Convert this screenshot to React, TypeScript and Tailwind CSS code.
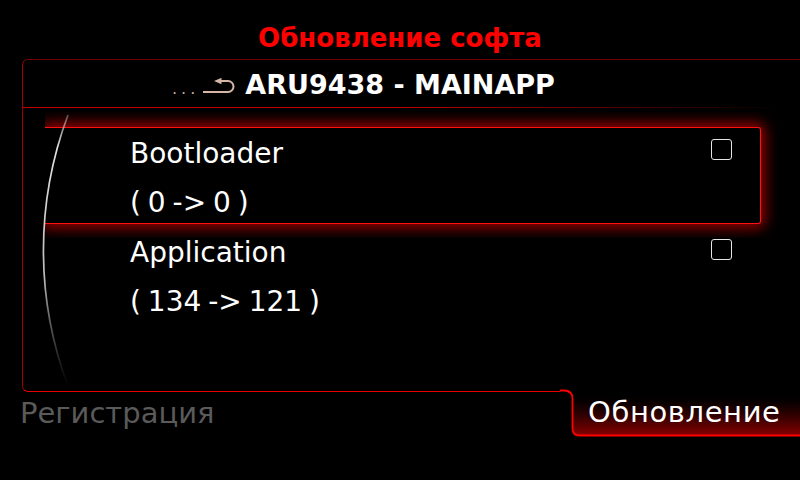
import React from "react";

function Checkbox() {
  return <div className="w-[21px] h-[21px] border-[1.5px] border-[#e6e6e6] rounded-[3px] shrink-0" />;
}

function ReturnIcon() {
  return (
    <svg width="34" height="16" viewBox="0 0 34 16" className="ml-[3px]">
      <path d="M1 14 H26 A5.5 5.5 0 0 0 26 3 H18" fill="none" stroke="#d6b6a6" strokeWidth="2" />
      <polygon points="12,3 19.5,-0.2 19.5,6.2" fill="#d6b6a6" />
    </svg>
  );
}

export default function App() {
  return (
    <div className="w-[800px] h-[480px] bg-black overflow-hidden font-['DejaVu_Sans',sans-serif] text-white flex flex-col">
      {/* Title */}
      <div className="h-[59px] pt-[23px] text-center text-[26px] leading-[30px] font-bold text-[#ff0000]">
        Обновление софта
      </div>

      {/* Panel */}
      <div className="relative ml-[22px] h-[333px] shrink-0 border-t border-l border-b border-t-[#700000] border-l-[#a00000] border-b-[#e80000] rounded-l-[6px]">
        {/* Header */}
        <div className="h-[47px] pt-[3px] pl-[149px] flex items-baseline leading-[44px]">
          <span className="text-[16px] tracking-[4px] text-[#c8a898]">...</span>
          <ReturnIcon />
          <span className="ml-[9px] text-[27px] font-bold">ARU9438 - MAINAPP</span>
        </div>
        <div className="h-px bg-gradient-to-r from-[#c00000] via-[#c00000] to-transparent w-[760px]" />

        {/* Selected row (glow clipped on the left) */}
        <div className="mt-[4px] ml-[22px] w-[740px] overflow-hidden pt-[15px] pr-[24px] pb-[14px] -mb-[14px]">
          <div className="w-[716px] h-[97px] border border-l-0 border-[#ff1010] rounded-r-[3px] bg-black shadow-[0_0_14px_4px_rgba(255,0,0,0.6)] flex items-start">
            <div className="flex-1 pl-[85px] pt-[1px] text-[28px] leading-[49px] [word-spacing:-2px]">
              <div>Bootloader</div>
              <div>( 0 -&gt; 0 )</div>
            </div>
            <div className="mt-[11px] mr-[28px]">
              <Checkbox />
            </div>
          </div>
        </div>

        {/* Second row */}
        <div className="ml-[22px] w-[716px] h-[96px] flex items-start">
          <div className="flex-1 pl-[85px] pt-[4px] text-[28px] leading-[49px] [word-spacing:-2px]">
            <div>Application</div>
            <div>( 134 -&gt; 121 )</div>
          </div>
          <div className="mt-[15px] mr-[29px]">
            <Checkbox />
          </div>
        </div>

        <svg className="absolute left-0 top-0" width="100" height="331" viewBox="0 0 100 331">
          <defs>
            <linearGradient id="arcg" gradientUnits="userSpaceOnUse" x1="0" y1="55" x2="0" y2="326">
              <stop offset="0" stopColor="#ffffff" stopOpacity="0.3" />
              <stop offset="0.12" stopColor="#eeeeee" stopOpacity="0.95" />
              <stop offset="0.6" stopColor="#d0d0d0" stopOpacity="0.9" />
              <stop offset="1" stopColor="#909090" stopOpacity="0" />
            </linearGradient>
          </defs>
          <path d="M45 55 A386 386 0 0 0 45 326" fill="none" stroke="url(#arcg)" strokeWidth="1.7" />
        </svg>
      </div>

      {/* Bottom tabs */}
      <div className="flex items-start">
        <div className="w-[560px] pl-[20px] pt-[4px] text-[29px] leading-[34px] text-[#5a5a5a]">
          Регистрация
        </div>
        <div className="relative w-[240px] h-[52px] -mt-[7px] bg-black">
          <div className="absolute left-[13px] top-[6px] right-0 bottom-[1px] rounded-bl-[7px] bg-gradient-to-b from-black via-[#2a0000] to-[#8a0000]" />
          <svg className="absolute left-0 top-0" width="240" height="52" viewBox="0 0 240 52">
            <path d="M0 5.5 H4 Q12.5 5.5 12.5 14 V44 Q12.5 50.5 20 50.5 H240" fill="none" stroke="#ff0000" strokeWidth="1.8" />
          </svg>
          <div className="relative pl-[28px] pt-[10px] text-[29px] leading-[34px] tracking-[0.6px] text-white">
            Обновление
          </div>
        </div>
      </div>
    </div>
  );
}
